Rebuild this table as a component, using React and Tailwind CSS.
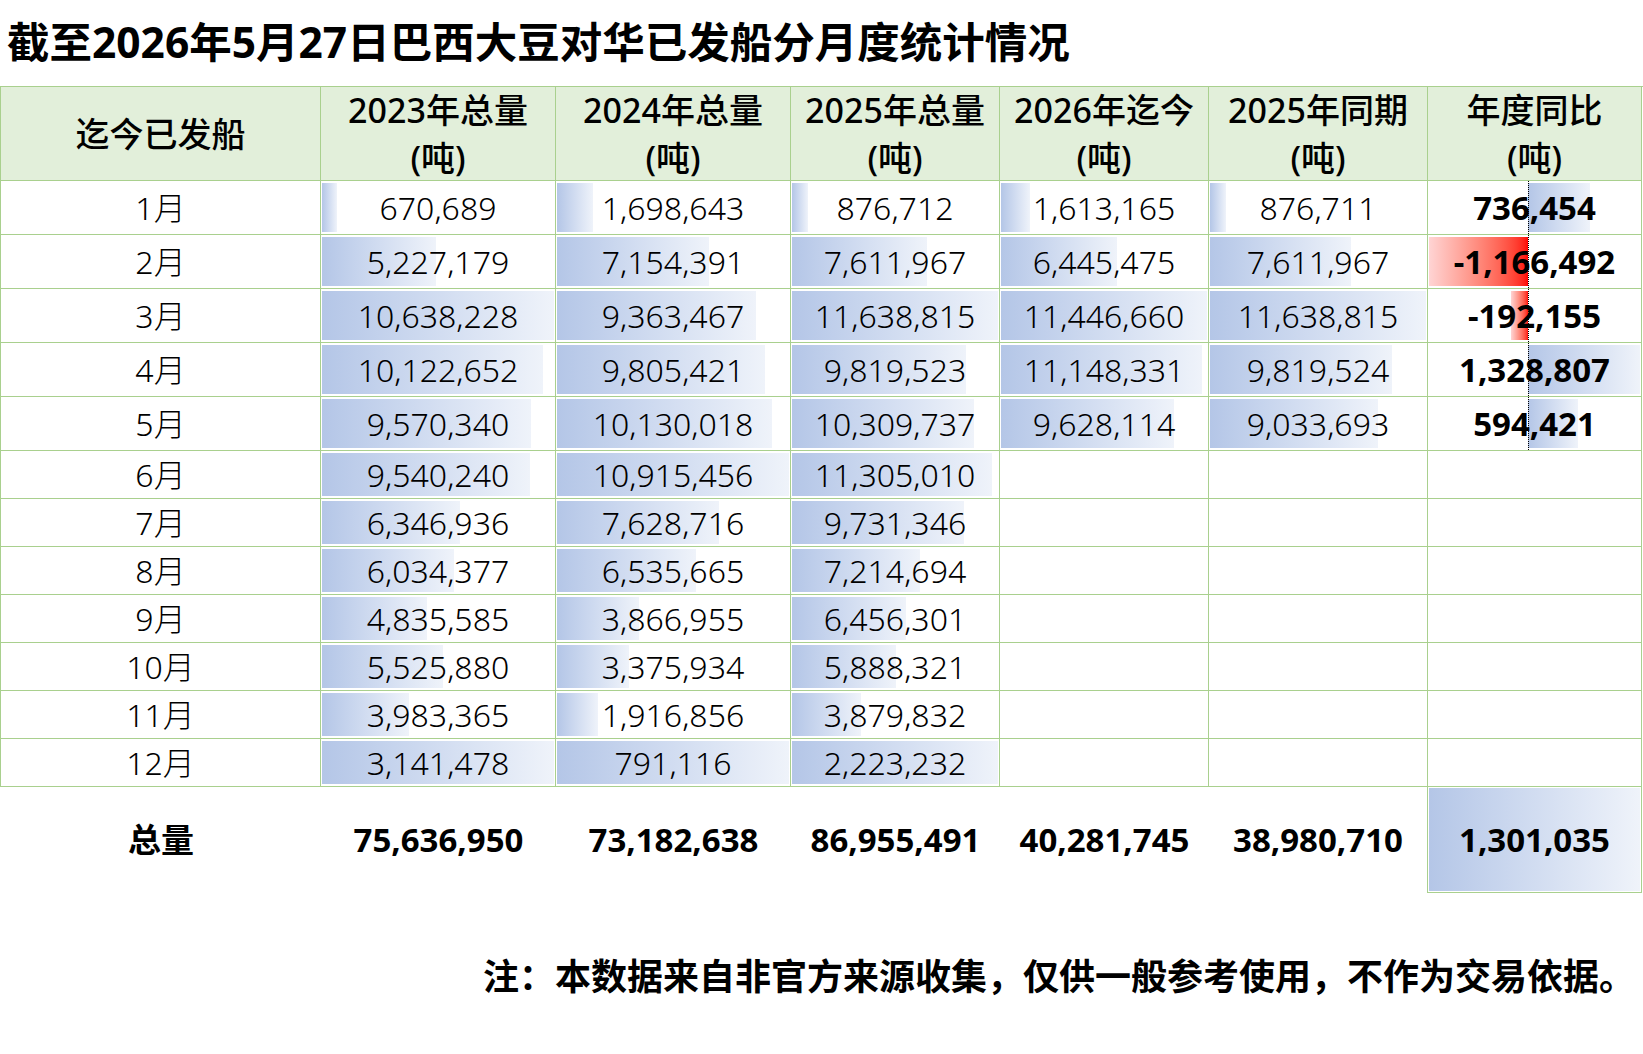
import React from "react";

const COLS = "grid grid-cols-[320px_235px_235px_209px_209px_219px_214px]";
const LINE = "border-[#a9d08e]";

const headers = [
  ["迄今已发船"],
  ["2023年总量", "(吨)"],
  ["2024年总量", "(吨)"],
  ["2025年总量", "(吨)"],
  ["2026年迄今", "(吨)"],
  ["2025年同期", "(吨)"],
  ["年度同比", "(吨)"],
];

// month, monthly values per column, year-over-year
const rows = [
  ["1月", [670689, 1698643, 876712, 1613165, 876711], 736454],
  ["2月", [5227179, 7154391, 7611967, 6445475, 7611967], -1166492],
  ["3月", [10638228, 9363467, 11638815, 11446660, 11638815], -192155],
  ["4月", [10122652, 9805421, 9819523, 11148331, 9819524], 1328807],
  ["5月", [9570340, 10130018, 10309737, 9628114, 9033693], 594421],
  ["6月", [9540240, 10915456, 11305010]],
  ["7月", [6346936, 7628716, 9731346]],
  ["8月", [6034377, 6535665, 7214694]],
  ["9月", [4835585, 3866955, 6456301]],
  ["10月", [5525880, 3375934, 5888321]],
  ["11月", [3983365, 1916856, 3879832]],
  ["12月", [3141478, 791116, 2223232]],
];

const totals = [75636950, 73182638, 86955491, 40281745, 38980710];
const totalYoy = 1301035;

const colMax = [0, 1, 2, 3, 4].map((c) =>
  Math.max(...rows.map((r) => r[1][c] || 0))
);
const negMax = 1166492;
const posMax = 1328807;
const axis = negMax / (negMax + posMax);

const fmt = (n) => n.toLocaleString("en-US");

function Bar({ ratio }) {
  return (
    <div
      className="absolute left-px top-[2px] bottom-[2px] bg-linear-to-r from-[#b4c6e7] to-[#eff3fa]"
      style={{ width: `calc((100% - 2px) * ${ratio})` }}
    />
  );
}

function ValueCell({ value, ratio, h }) {
  return (
    <div className={`relative ${h} border-r border-b ${LINE} flex items-center justify-center`}>
      {value != null && <Bar ratio={ratio} />}
      {value != null && <span className="relative text-[32px] font-light">{fmt(value)}</span>}
    </div>
  );
}

function YoyCell({ value, h }) {
  return (
    <div className={`relative ${h} border-r border-b ${LINE} flex items-center justify-center`}>
      {value != null && (
        <>
          <div className="absolute left-px right-px top-[2px] bottom-[2px] flex">
            <div className="flex justify-end" style={{ width: `${axis * 100}%` }}>
              {value < 0 && (
                <div
                  className="h-full bg-linear-to-r from-[#ffd4d4] to-[#ff0000]"
                  style={{ width: `${(-value / negMax) * 100}%` }}
                />
              )}
            </div>
            <div className="flex-1">
              {value > 0 && (
                <div
                  className="h-full bg-linear-to-r from-[#b4c6e7] to-[#eff3fa]"
                  style={{ width: `${(value / posMax) * 100}%` }}
                />
              )}
            </div>
          </div>
          <div
            className="absolute top-0 bottom-0 border-l border-dotted border-black"
            style={{ left: `calc(1px + (100% - 2px) * ${axis})` }}
          />
          <span className="relative text-[33px] font-bold">{fmt(value)}</span>
        </>
      )}
    </div>
  );
}

export default function App() {
  return (
    <div
      lang="zh-CN"
      className="w-[1643px] h-[1054px] bg-white text-black font-['Noto_Sans','Noto_Sans_CJK_SC',sans-serif]"
    >
      {/* Title */}
      <div className="h-[86px] flex items-center pl-[7px] pb-[2px]">
        <h1 className="text-[42.5px] font-bold leading-none">
          截至2026年5月27日巴西大豆对华已发船分月度统计情况
        </h1>
      </div>

      {/* Table */}
      <div className={`${COLS} border-l border-t ${LINE}`}>
        {headers.map((lines, i) => (
          <div
            key={i}
            className={`h-[94px] bg-[#e2efda] border-r border-b ${LINE} flex flex-col items-center justify-center text-[34px] font-medium leading-[48px]`}
          >
            {lines.map((t) => (
              <span key={t}>{t}</span>
            ))}
          </div>
        ))}

        {rows.map(([month, vals, yoy], r) => {
          const h = r < 5 ? "h-[54px]" : "h-[48px]";
          return (
            <React.Fragment key={month}>
              <div className={`${h} border-r border-b ${LINE} flex items-center justify-center text-[32px] font-light`}>
                {month}
              </div>
              {[0, 1, 2, 3, 4].map((c) => (
                <ValueCell
                  key={c}
                  h={h}
                  value={vals[c]}
                  ratio={month === "12月" ? 1 : (vals[c] || 0) / colMax[c]}
                />
              ))}
              <YoyCell h={h} value={yoy} />
            </React.Fragment>
          );
        })}
      </div>

      {/* Totals */}
      <div className={`${COLS} pl-px text-[33px] font-bold`}>
        <div className="h-[106px] flex items-center justify-center">总量</div>
        {totals.map((t, i) => (
          <div
            key={i}
            className={`h-[106px] flex items-center justify-center ${i === 4 ? `border-r ${LINE}` : ""}`}
          >
            {fmt(t)}
          </div>
        ))}
        <div className={`relative h-[106px] border-r border-b ${LINE} flex items-center justify-center`}>
          <div className="absolute inset-px bg-linear-to-r from-[#b4c6e7] to-[#eff3fa]" />
          <span className="relative">{fmt(totalYoy)}</span>
        </div>
      </div>

      {/* Note */}
      <div className="h-[161px] flex items-center justify-end pr-[8px]">
        <p className="text-[36px] font-bold leading-none font-['Noto_Sans_CJK_SC','Noto_Sans',sans-serif]">
          注：本数据来自非官方来源收集，仅供一般参考使用，不作为交易依据。
        </p>
      </div>
    </div>
  );
}
